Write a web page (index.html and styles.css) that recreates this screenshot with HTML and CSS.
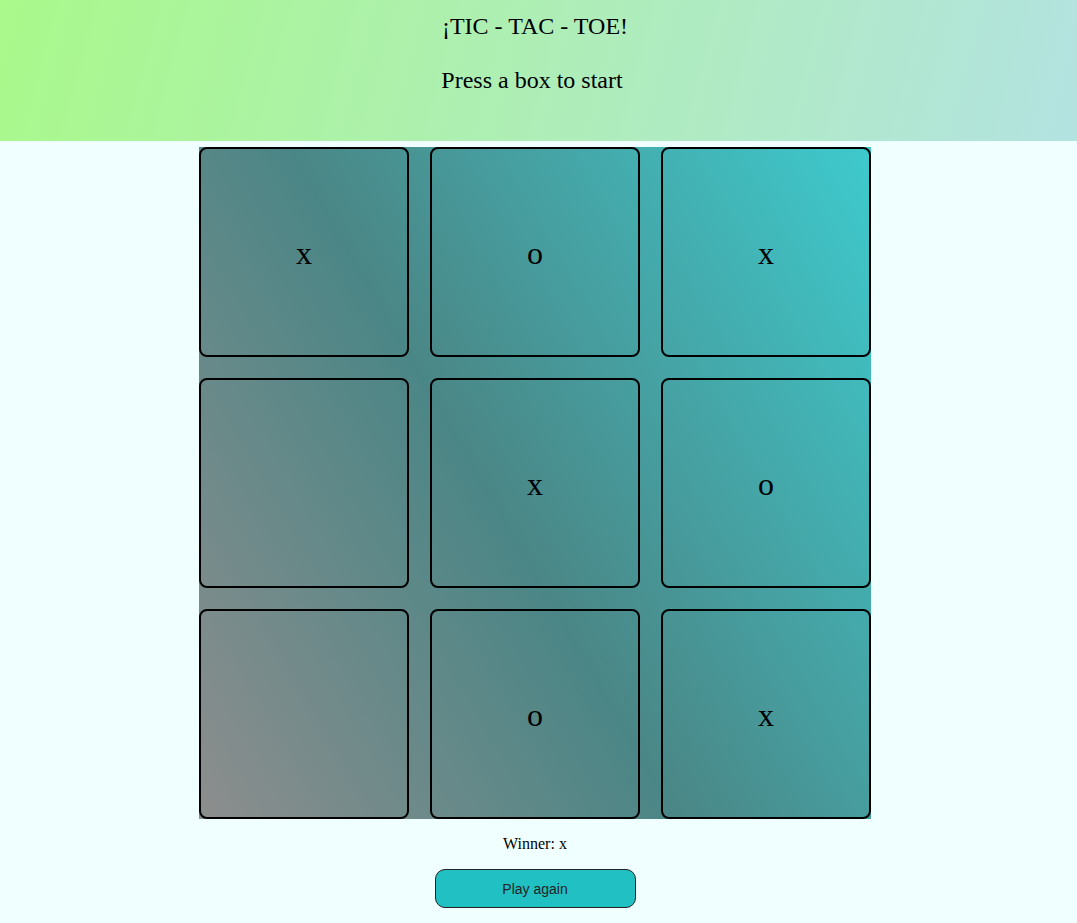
FILE: index.html
```html
<!DOCTYPE html>
<html lang="en">
<head>
<meta charset="utf-8">
<title>Tic Tac Toe</title>
<link rel="stylesheet" href="styles.css">
</head>
<body>
  <header class="header">
    <h1 class="title">¡TIC - TAC - TOE!</h1>
    <p class="status">Press a box to start</p>
  </header>
  <main class="game">
    <div class="board">
      <div class="cell">x</div>
      <div class="cell">o</div>
      <div class="cell">x</div>
      <div class="cell"></div>
      <div class="cell">x</div>
      <div class="cell">o</div>
      <div class="cell"></div>
      <div class="cell">o</div>
      <div class="cell">x</div>
    </div>
    <p class="winner">Winner: x</p>
    <button class="again" type="button">Play again</button>
  </main>
</body>
</html>
```
FILE: styles.css
```css
html, body {
  margin: 0;
  padding: 0;
}
body {
  background: #f0ffff;
  font-family: "Liberation Serif", "Times New Roman", serif;
  color: #000;
}
.header {
  height: 141px;
  box-sizing: border-box;
  padding: 13px 7px 0 0;
  background: linear-gradient(105deg, #a9f98b, #b3e3e1);
  text-align: center;
}
.title {
  margin: 0;
  font-size: 24px;
  font-weight: normal;
  line-height: 27px;
}
.status {
  margin: 27px 6px 0 0;
  font-size: 24px;
  line-height: 27px;
}
.game {
  display: flex;
  flex-direction: column;
  align-items: center;
  padding: 6px 7px 0 0;
}
.board {
  width: 672px;
  height: 672px;
  display: grid;
  grid-template-columns: repeat(3, 1fr);
  grid-template-rows: repeat(3, 1fr);
  gap: 21px;
  background: linear-gradient(60deg, #8d8d8d 0%, #4b8686 45%, #3ecacd 100%);
}
.cell {
  box-sizing: border-box;
  border: 2px solid #000;
  border-radius: 8px;
  display: flex;
  align-items: center;
  justify-content: center;
  font-size: 32px;
  padding-top: 2px;
}
.winner {
  margin: 16px 0 0;
  font-size: 16px;
  line-height: 18px;
}
.again {
  margin-top: 16px;
  width: 201px;
  height: 39px;
  background: #21c0c3;
  border: 1px solid #222;
  border-radius: 10px;
  font-family: "Liberation Sans", Arial, sans-serif;
  font-size: 14px;
  color: #222;
}
```
